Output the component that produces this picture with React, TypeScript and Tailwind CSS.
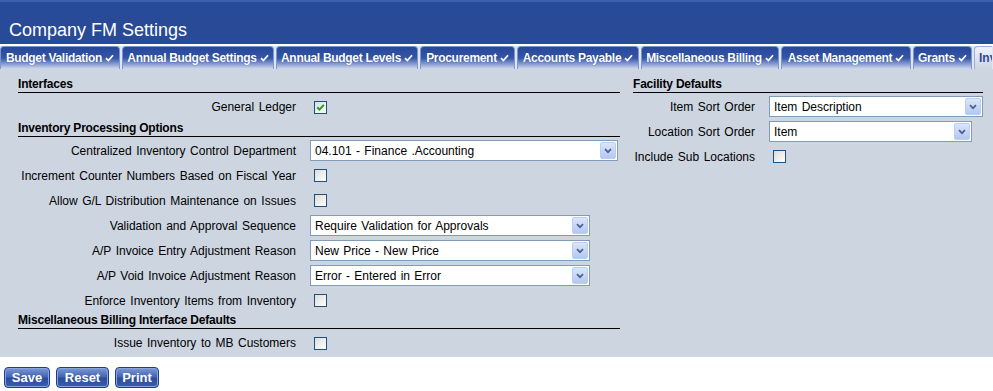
import React from "react";

const tabs: { label: string; w: string }[] = [
  { label: "Budget Validation", w: "w-[120px]" },
  { label: "Annual Budget Settings", w: "w-[152px]" },
  { label: "Annual Budget Levels", w: "w-[142px]" },
  { label: "Procurement", w: "w-[95px]" },
  { label: "Accounts Payable", w: "w-[122px]" },
  { label: "Miscellaneous Billing", w: "w-[138px]" },
  { label: "Asset Management", w: "w-[130px]" },
  { label: "Grants", w: "w-[59px]" },
];

function Check() {
  return (
    <svg width="9" height="8" viewBox="0 0 9 8" className="ml-[3px] shrink-0">
      <path d="M1 4.2 L3.4 6.6 L8 1.2" stroke="#ffffff" strokeWidth="1.7" fill="none" />
    </svg>
  );
}

function Select({ w, value }: { w: string; value: string }) {
  return (
    <div className={`${w} h-[21px] bg-white border border-[#7f9db9] flex items-center justify-between pl-[4px] pr-[1px]`}>
      <span className="text-[12px] text-black leading-none [word-spacing:1px]">{value}</span>
      <span className="w-[16px] h-[17px] rounded-[2px] bg-[linear-gradient(to_bottom,#dbe5fb,#b3c7f3)] border border-[#bccdf1] flex items-center justify-center">
        <svg width="8" height="6" viewBox="0 0 8 6">
          <path d="M1 1.2 L4 4.2 L7 1.2" stroke="#4d6185" strokeWidth="1.7" fill="none" />
        </svg>
      </span>
    </div>
  );
}

function Box({ checked }: { checked?: boolean }) {
  return (
    <span className="w-[13px] h-[13px] border border-[#1c5180] bg-[linear-gradient(135deg,#dcdcd6,#ffffff)] flex items-center justify-center">
      {checked && (
        <svg width="9" height="9" viewBox="0 0 9 9">
          <path d="M1.3 4.3 L3.5 6.6 L7.8 1.8" stroke="#21a121" strokeWidth="2" fill="none" />
        </svg>
      )}
    </span>
  );
}

function Header({ children }: { children: React.ReactNode }) {
  return (
    <div className="h-[16px] border-b border-black text-[12px] font-bold leading-[15px] text-black tracking-[-0.2px]">
      {children}
    </div>
  );
}

function Row({ label, children, h = "h-[25px]" }: { label: string; children: React.ReactNode; h?: string }) {
  return (
    <div className={`${h} flex items-center`}>
      <div className="w-[278px] text-right text-[12px] text-black whitespace-nowrap [word-spacing:1.2px]">{label}</div>
      <div className="ml-[14px] flex items-center">{children}</div>
    </div>
  );
}

function RRow({ label, children }: { label: string; children: React.ReactNode }) {
  return (
    <div className="h-[25px] flex items-center">
      <div className="w-[122px] text-right text-[12px] text-black whitespace-nowrap [word-spacing:1.2px]">{label}</div>
      <div className="ml-[14px] flex items-center">{children}</div>
    </div>
  );
}

function Btn({ children, w }: { children: React.ReactNode; w: string }) {
  return (
    <button className={`${w} h-[21px] rounded-[4px] border border-[#1f3d86] bg-[linear-gradient(to_bottom,#7d98d6_0%,#4466b4_45%,#2c4d9c_55%,#3b5db0_100%)] text-white text-[13px] font-bold leading-none flex items-center justify-center shadow-[inset_0_0_0_1px_#8aa4dc]`}>
      {children}
    </button>
  );
}

export default function App() {
  return (
    <div className="w-[993px] h-[391px] overflow-hidden bg-white font-['Liberation_Sans',Arial,sans-serif]">
      <div className="h-[44px] bg-[#294a96] border-t-2 border-[#3c5fae] flex items-end pl-[9px] pb-[3px]">
        <span className="text-white text-[18px] leading-[22px]">Company FM Settings</span>
      </div>
      <div className="h-[2px] bg-white" />
      <div className="h-[23px] flex gap-[2px] bg-[#dfe5f3] overflow-hidden">
        {tabs.map((t) => (
          <div
            key={t.label}
            className={`${t.w} shrink-0 h-[23px] rounded-t-[4px] border border-b-0 border-[#7c95cf] bg-[linear-gradient(to_bottom,#27479a_0%,#3555a6_50%,#8fa3d6_80%,#d3daee_100%)] flex items-center justify-center pb-[1px]`}
          >
            <span className="text-white text-[12px] font-bold tracking-[-0.3px] whitespace-nowrap [text-shadow:0_0_1px_#1c3a80]">
              {t.label}
            </span>
            <Check />
          </div>
        ))}
        <div className="w-[18px] shrink-0 h-[23px] rounded-tl-[4px] border border-b-0 border-r-0 border-[#9aaedb] bg-[linear-gradient(to_bottom,#eef2fa,#cdd5e2)] flex items-center pl-[4px] pb-[1px] overflow-hidden">
          <span className="text-[#2a4a96] text-[12px] font-bold whitespace-nowrap">Inv</span>
        </div>
      </div>
      <div className="h-[288px] bg-[#cdd5e1] flex">
        <div className="w-[620px] pl-[18px] pt-[8px]">
          <Header>Interfaces</Header>
          <Row label="General Ledger" h="h-[28px]">
            <span className="ml-[4px]"><Box checked /></span>
          </Row>
          <Header>Inventory Processing Options</Header>
          <div className="mt-[1px]">
            <Row label="Centralized Inventory Control Department">
              <Select w="w-[308px]" value="04.101 - Finance .Accounting" />
            </Row>
            <Row label="Increment Counter Numbers Based on Fiscal Year">
              <span className="ml-[4px]"><Box /></span>
            </Row>
            <Row label="Allow G/L Distribution Maintenance on Issues">
              <span className="ml-[4px]"><Box /></span>
            </Row>
            <Row label="Validation and Approval Sequence">
              <Select w="w-[280px]" value="Require Validation for Approvals" />
            </Row>
            <Row label="A/P Invoice Entry Adjustment Reason">
              <Select w="w-[280px]" value="New Price - New Price" />
            </Row>
            <Row label="A/P Void Invoice Adjustment Reason">
              <Select w="w-[280px]" value="Error - Entered in Error" />
            </Row>
            <Row label="Enforce Inventory Items from Inventory">
              <span className="ml-[4px]"><Box /></span>
            </Row>
          </div>
          <Header>Miscellaneous Billing Interface Defaults</Header>
          <Row label="Issue Inventory to MB Customers" h="h-[28px]">
            <span className="ml-[4px]"><Box /></span>
          </Row>
        </div>
        <div className="w-[350px] ml-[13px] pt-[8px]">
          <Header>Facility Defaults</Header>
          <div className="mt-[1px]">
            <RRow label="Item Sort Order">
              <Select w="w-[214px]" value="Item Description" />
            </RRow>
            <RRow label="Location Sort Order">
              <Select w="w-[203px]" value="Item" />
            </RRow>
            <RRow label="Include Sub Locations">
              <span className="ml-[4px]"><Box /></span>
            </RRow>
          </div>
        </div>
      </div>
      <div className="flex gap-[6px] pl-[4px] pt-[10px]">
        <Btn w="w-[46px]">Save</Btn>
        <Btn w="w-[53px]">Reset</Btn>
        <Btn w="w-[44px]">Print</Btn>
      </div>
    </div>
  );
}
